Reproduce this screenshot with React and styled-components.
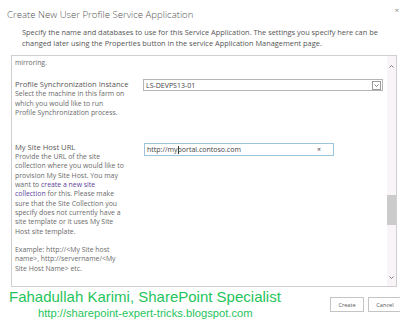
import React from "react";
import styled, { createGlobalStyle } from "styled-components";

const Global = createGlobalStyle`
  html, body { margin: 0; padding: 0; background: #fff; }
  body { width: 400px; height: 323px; overflow: hidden; font-family: "Open Sans", "Noto Sans", sans-serif; color: #444; }
`;

const Page = styled.div`
  position: relative;
  width: 400px;
  height: 323px;
  overflow: hidden;
  display: flex;
  flex-direction: column;
`;

const Header = styled.div`
  display: flex;
  align-items: center;
  justify-content: space-between;
  height: 22px;
  padding: 6px 0 0 7px;
  box-sizing: border-box;
`;

const Title = styled.div`
  font-size: 9.6px;
  font-weight: 300;
  color: #555;
`;

const Close = styled.div`
  font-size: 8px;
  line-height: 8px;
  color: #888;
  margin-right: 1px;
  margin-top: -9px;
`;

const Intro = styled.div`
  padding: 5px 0 0 22px;
  font-size: 7.4px;
  line-height: 11px;
  color: #555;
  height: 28px;
`;

const Panel = styled.div`
  margin-left: 11px;
  width: 386px;
  height: 232px;
  box-sizing: border-box;
  border: 1px solid #cfcfcf;
  display: flex;
  overflow: hidden;
`;

const Content = styled.div`
  flex: 1;
  padding: 2px 0 0 3px;
  overflow: hidden;
`;

const Line = styled.div`
  font-size: 6.8px;
  line-height: 9.3px;
  color: #6a6a6a;
`;

const Section = styled.div`
  display: grid;
  grid-template-columns: 128px 1fr;
  align-items: start;
  margin-top: ${(p) => p.$top}px;
`;

const Label = styled.div`
  font-size: 7.6px;
  line-height: 10px;
  color: #575757;
`;

const Desc = styled.div`
  font-size: 6.9px;
  line-height: 9.3px;
  color: #6a6a6a;
  & + & { margin-top: 9.3px; }
`;

const Link = styled.span`
  color: #5b3d98;
`;

const SelectBox = styled.div`
  width: 240px;
  height: 12px;
  box-sizing: border-box;
  border: 1px solid #b5b5b5;
  display: flex;
  align-items: center;
  justify-content: space-between;
  font-size: 7px;
  color: #444;
  padding-left: 2px;
`;

const DropBtn = styled.div`
  width: 9px;
  height: 9px;
  margin-right: 1px;
  box-sizing: border-box;
  border: 1px solid #9a9a9a;
  display: flex;
  align-items: center;
  justify-content: center;
`;

const InputBox = styled.div`
  width: 190px;
  height: 13px;
  margin-top: 1px;
  margin-left: 1px;
  box-sizing: border-box;
  border: 1px solid #9cc4dc;
  display: flex;
  align-items: center;
  justify-content: space-between;
  font-size: 7px;
  color: #444;
  padding: 0 12px 0 2px;
`;

const Caret = styled.span`
  display: inline-block;
  width: 1px;
  height: 8px;
  background: #333;
  vertical-align: middle;
  margin: 0 -1px 0 0;
`;

const Clear = styled.span`
  font-size: 7px;
  color: #444;
`;

const ScrollTrack = styled.div`
  width: 9px;
  background: #f8f4f8;
  display: flex;
  flex-direction: column;
  align-items: center;
  padding: 9px 0 7px;
  box-sizing: border-box;
`;

const Thumb = styled.div`
  width: 9px;
  height: 30px;
  background: #cbcbcb;
  margin-top: 127px;
`;

const Spacer = styled.div`
  flex: 1;
`;

const Footer = styled.div`
  display: flex;
  justify-content: space-between;
  padding-left: 9px;
`;

const Credit = styled.div`
  display: flex;
  flex-direction: column;
  font-family: "Liberation Sans", Arial, sans-serif;
  color: #1fc45c;
`;

const Name = styled.div`
  font-size: 15px;
  line-height: 17px;
  margin-top: 1px;
`;

const Url = styled.div`
  font-size: 11.2px;
  line-height: 13px;
  margin-left: 29px;
  margin-top: 2px;
`;

const Buttons = styled.div`
  display: flex;
  gap: 4px;
  margin-top: 10px;
  margin-right: -2px;
`;

const Button = styled.div`
  width: 34px;
  height: 15px;
  box-sizing: border-box;
  border: 1px solid #c4c4c4;
  display: flex;
  align-items: center;
  justify-content: center;
  font-size: 5.6px;
  color: #555;
`;

const Chevron = ({ up, size = 6 }) => (
  <svg width={size} height={size * 0.6} viewBox="0 0 10 6">
    <path
      d={up ? "M1 5 L5 1 L9 5" : "M1 1 L5 5 L9 1"}
      fill="none"
      stroke="#555"
      strokeWidth="1.4"
    />
  </svg>
);

export default function App() {
  return (
    <Page>
      <Global />
      <Header>
        <Title>Create New User Profile Service Application</Title>
        <Close>×</Close>
      </Header>
      <Intro>
        Specify the name and databases to use for this Service Application. The settings you specify here can be
        <br />
        changed later using the Properties button in the service Application Management page.
      </Intro>
      <Panel>
        <Content>
          <Line>mirroring.</Line>
          <Section $top={12}>
            <div>
              <Label>Profile Synchronization Instance</Label>
              <Desc>
                Select the machine in this farm on
                <br />
                which you would like to run
                <br />
                Profile Synchronization process.
              </Desc>
            </div>
            <SelectBox>
              <span>LS-DEVPS13-01</span>
              <DropBtn>
                <Chevron size={5} />
              </DropBtn>
            </SelectBox>
          </Section>
          <Section $top={25}>
            <div>
              <Label>My Site Host URL</Label>
              <Desc>
                Provide the URL of the site
                <br />
                collection where you would like to
                <br />
                provision My Site Host. You may
                <br />
                want to <Link>create a new site</Link>
                <br />
                <Link>collection</Link> for this. Please make
                <br />
                sure that the Site Collection you
                <br />
                specify does not currently have a
                <br />
                site template or it uses My Site
                <br />
                Host site template.
              </Desc>
              <Desc>
                Example: http://&lt;My Site host
                <br />
                name&gt;, http://servername/&lt;My
                <br />
                Site Host Name&gt; etc.
              </Desc>
            </div>
            <InputBox>
              <span>
                http://my<Caret />portal.contoso.com
              </span>
              <Clear>×</Clear>
            </InputBox>
          </Section>
        </Content>
        <ScrollTrack>
          <Chevron up size={5} />
          <Thumb />
          <Spacer />
          <Chevron size={5} />
        </ScrollTrack>
      </Panel>
      <Footer>
        <Credit>
          <Name>Fahadullah Karimi, SharePoint Specialist</Name>
          <Url>http://sharepoint-expert-tricks.blogspot.com</Url>
        </Credit>
        <Buttons>
          <Button>Create</Button>
          <Button>Cancel</Button>
        </Buttons>
      </Footer>
    </Page>
  );
}
